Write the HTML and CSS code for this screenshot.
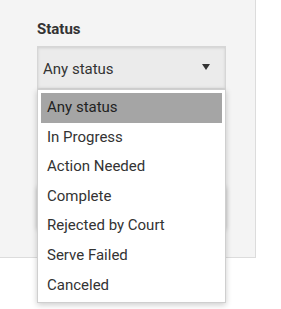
FILE: index.html
```html
<!DOCTYPE html>
<html>
<head>
<meta charset="utf-8">
<link rel="stylesheet" href="styles.css">
</head>
<body>
<div class="panel">
  <div class="field">
    <div class="label">Status</div>
    <div class="select">
      <span>Any status</span>
      <svg class="caret" width="8" height="6" viewBox="0 0 8 6"><path d="M0 0H8L4 6Z" fill="#333"/></svg>
    </div>
    <ul class="menu">
      <li class="active">Any status</li>
      <li>In Progress</li>
      <li>Action Needed</li>
      <li>Complete</li>
      <li>Rejected by Court</li>
      <li>Serve Failed</li>
      <li>Canceled</li>
    </ul>
  </div>
  <div class="button"></div>
</div>
</body>
</html>
```
FILE: styles.css
```css
html, body {
  margin: 0;
  padding: 0;
  background: #fff;
  font-family: Roboto, "Liberation Sans", sans-serif;
}
body {
  min-height: 309px;
}
.panel {
  width: 256px;
  height: 258px;
  background: #f4f4f4;
  border-right: 1px solid #dcdcdc;
  border-bottom: 1px solid #dcdcdc;
  padding: 20px 0 0 37px;
  box-sizing: border-box;
  display: flex;
  flex-direction: column;
}
.field {
  position: relative;
  width: 189px;
}
.label {
  font-size: 15px;
  font-weight: 700;
  color: #333;
  line-height: 18px;
  margin-bottom: 8px;
}
.select {
  height: 43px;
  box-sizing: border-box;
  background: #ebebeb;
  border: 1px solid #d6d6d6;
  box-shadow: inset 0 1px 3px rgba(0,0,0,0.12);
  display: flex;
  align-items: center;
  justify-content: space-between;
  padding: 2px 15px 0 5px;
  font-size: 15px;
  color: #333;
}
.caret { margin-top: -3px; }
.menu {
  position: absolute;
  top: 69px;
  left: 0;
  z-index: 2;
  width: 189px;
  box-sizing: border-box;
  margin: 0;
  padding: 3px 3px 2px;
  list-style: none;
  background: #fff;
  border: 1px solid #cfcfcf;
  box-shadow: 0 2px 6px rgba(0,0,0,0.2);
}
.menu li {
  height: 29.6px;
  line-height: 29px;
  padding-left: 6px;
  font-size: 15px;
  color: #333;
}
.menu li.active {
  background: #a5a5a5;
  color: #222;
}
.button {
  margin-top: 98px;
  width: 189px;
  height: 43px;
  background: #eee;
  box-shadow: 0 0 5px rgba(0,0,0,0.2);
}
```
